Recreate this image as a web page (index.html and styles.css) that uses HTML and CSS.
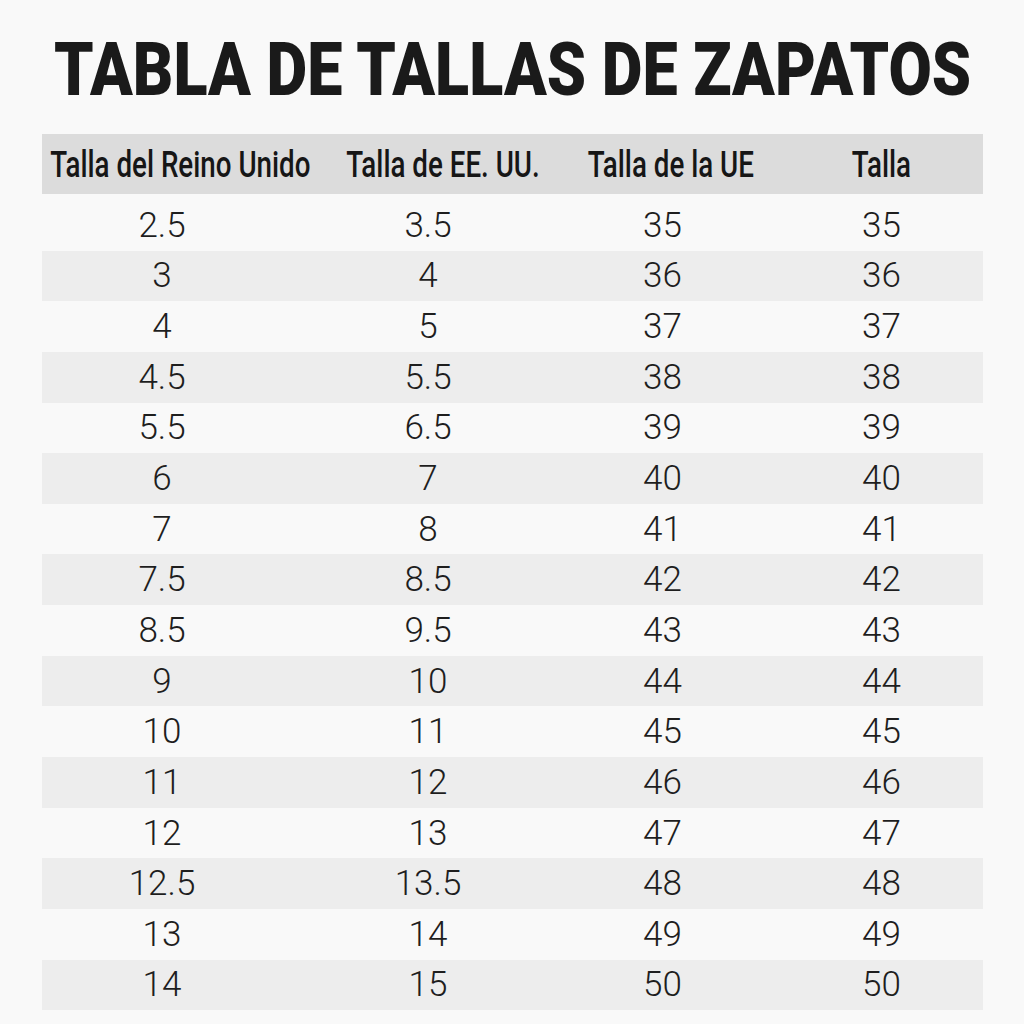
FILE: index.html
```html
<!DOCTYPE html>
<html lang="es">
<head>
<meta charset="utf-8">
<link rel="stylesheet" href="styles.css">
</head>
<body>
<main class="page">
  <h1 class="title"><span class="squeeze">TABLA DE TALLAS DE ZAPATOS</span></h1>
  <div class="table">
    <div class="row head">
      <div class="cell c1"><span class="squeeze">Talla del Reino Unido</span></div>
      <div class="cell c2"><span class="squeeze">Talla de EE. UU.</span></div>
      <div class="cell c3"><span class="squeeze">Talla de la UE</span></div>
      <div class="cell c4"><span class="squeeze">Talla</span></div>
    </div>
    <div class="row"><div class="cell">2.5</div><div class="cell">3.5</div><div class="cell">35</div><div class="cell">35</div></div>
    <div class="row"><div class="cell">3</div><div class="cell">4</div><div class="cell">36</div><div class="cell">36</div></div>
    <div class="row"><div class="cell">4</div><div class="cell">5</div><div class="cell">37</div><div class="cell">37</div></div>
    <div class="row"><div class="cell">4.5</div><div class="cell">5.5</div><div class="cell">38</div><div class="cell">38</div></div>
    <div class="row"><div class="cell">5.5</div><div class="cell">6.5</div><div class="cell">39</div><div class="cell">39</div></div>
    <div class="row"><div class="cell">6</div><div class="cell">7</div><div class="cell">40</div><div class="cell">40</div></div>
    <div class="row"><div class="cell">7</div><div class="cell">8</div><div class="cell">41</div><div class="cell">41</div></div>
    <div class="row"><div class="cell">7.5</div><div class="cell">8.5</div><div class="cell">42</div><div class="cell">42</div></div>
    <div class="row"><div class="cell">8.5</div><div class="cell">9.5</div><div class="cell">43</div><div class="cell">43</div></div>
    <div class="row"><div class="cell">9</div><div class="cell">10</div><div class="cell">44</div><div class="cell">44</div></div>
    <div class="row"><div class="cell">10</div><div class="cell">11</div><div class="cell">45</div><div class="cell">45</div></div>
    <div class="row"><div class="cell">11</div><div class="cell">12</div><div class="cell">46</div><div class="cell">46</div></div>
    <div class="row"><div class="cell">12</div><div class="cell">13</div><div class="cell">47</div><div class="cell">47</div></div>
    <div class="row"><div class="cell">12.5</div><div class="cell">13.5</div><div class="cell">48</div><div class="cell">48</div></div>
    <div class="row"><div class="cell">13</div><div class="cell">14</div><div class="cell">49</div><div class="cell">49</div></div>
    <div class="row"><div class="cell">14</div><div class="cell">15</div><div class="cell">50</div><div class="cell">50</div></div>
  </div>
</main>
</body>
</html>
```

FILE: styles.css
```css
html, body {
  margin: 0;
  padding: 0;
  background: #f9f9f9;
}
.page {
  width: 1024px;
  height: 1024px;
  overflow: hidden;
  box-sizing: border-box;
  padding: 30px 41px 0 42px;
  color: #1c1c1c;
}
.squeeze {
  display: inline-block;
  flex: none;
  white-space: nowrap;
  transform-origin: center center;
}
.title {
  margin: 0;
  height: 80px;
  display: flex;
  justify-content: center;
  align-items: center;
  font-family: "Roboto", sans-serif;
  font-weight: 900;
  font-size: 74px;
  line-height: 80px;
  color: #1a1a1a;
  white-space: nowrap;
}
.title .squeeze {
  transform: scaleX(0.85);
}
.table {
  margin-top: 24px;
  display: flex;
  flex-direction: column;
}
.row {
  display: grid;
  grid-template-columns: 253px 250px 227px 211px;
  height: 50.65px;
  align-items: center;
  font-family: "Roboto", sans-serif;
  font-weight: 300;
  font-size: 35px;
  color: #1e1e1e;
}
.row:nth-child(odd) {
  background: #ededed;
}
.row.head {
  height: 60px;
  margin-bottom: 6px;
  background: #dcdcdc;
  font-weight: 500;
  font-size: 37px;
  color: #161616;
}
.row.head .cell {
  display: flex;
  justify-content: center;
}
.row.head .squeeze {
  transform: scaleX(0.75);
}
.cell {
  text-align: center;
  white-space: nowrap;
}
.row .cell:nth-child(1) { padding-right: 13px; }
.row .cell:nth-child(2) { padding-left: 16px; }
.row .cell:nth-child(3) { padding-left: 8px; }
.row .cell:nth-child(4) { padding-left: 8px; }
.row.head .c1 { padding-left: 23px; padding-right: 0; }
.row.head .c2 { padding-left: 46px; }
.row.head .c3 { padding-left: 25px; }
.row.head .c4 { padding-left: 7px; }
```
